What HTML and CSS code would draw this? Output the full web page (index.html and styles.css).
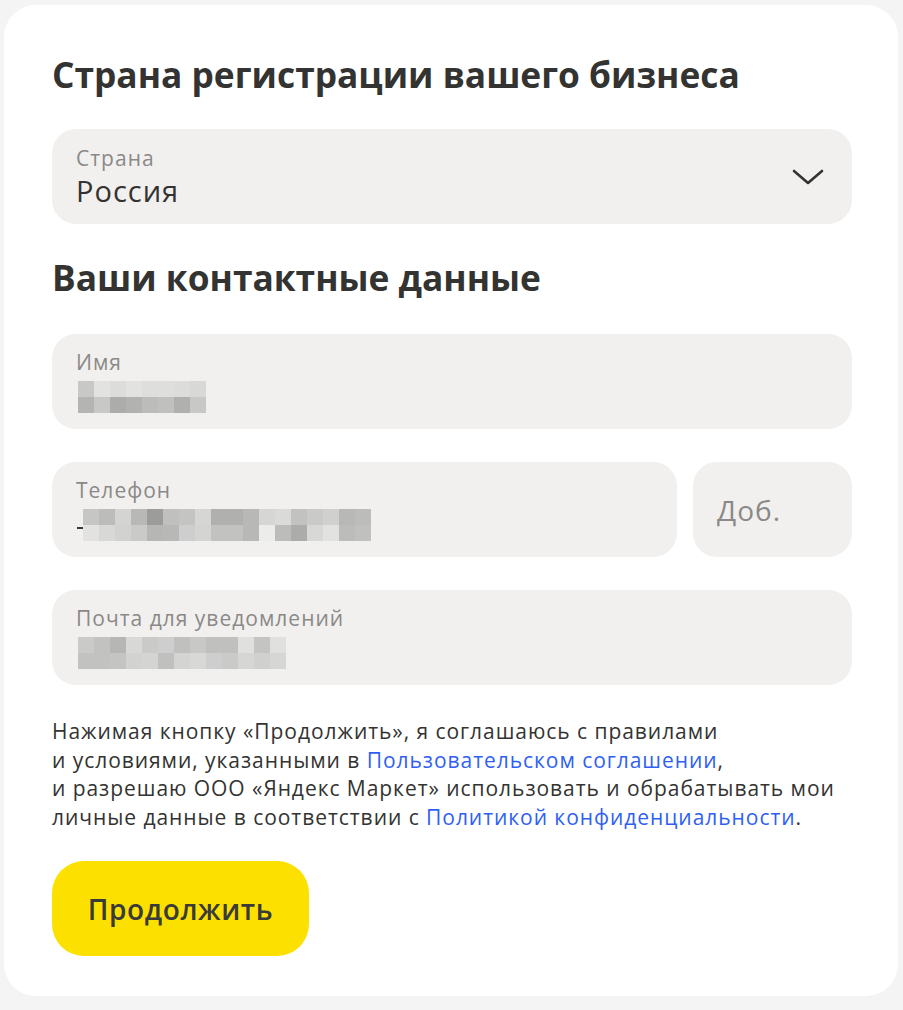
FILE: index.html
```html
<!DOCTYPE html>
<html lang="ru">
<head>
<meta charset="utf-8">
<title>Регистрация</title>
<link rel="stylesheet" href="styles.css">
</head>
<body>
<main class="card">
  <h2 class="title">Страна регистрации вашего бизнеса</h2>
  <div class="field select">
    <div class="field-body">
      <div class="label">Страна</div>
      <div class="value">Россия</div>
    </div>
    <svg class="chevron" width="32" height="18" viewBox="0 0 32 18"><path d="M2 3 L16 15 L30 3" fill="none" stroke="#333" stroke-width="2.6" stroke-linecap="round" stroke-linejoin="round"/></svg>
  </div>

  <h2 class="title second">Ваши контактные данные</h2>

  <div class="field">
    <div class="field-body">
      <div class="label">Имя</div>
      <div class="mosaic" style="grid-template-columns: repeat(8, 16px)">
        <i style="background:#c8c8c6"></i><i style="background:#e2e2e0"></i><i style="background:#dcdcda"></i><i style="background:#e2e2e0"></i><i style="background:#dededc"></i><i style="background:#dededc"></i><i style="background:#dcdcda"></i><i style="background:#d8d8d6"></i>
        <i style="background:#b4b4b2"></i><i style="background:#c8c8c6"></i><i style="background:#acacaa"></i><i style="background:#b2b2b0"></i><i style="background:#bcbcba"></i><i style="background:#c0c0be"></i><i style="background:#b0b0ae"></i><i style="background:#c8c8c6"></i>
      </div>
    </div>
  </div>

  <div class="row">
    <div class="field grow">
      <div class="field-body">
        <div class="label">Телефон</div>
        <div class="masked">
          <span class="dash"></span>
          <div class="mosaic" style="grid-template-columns: repeat(18, 16px)">
            <i style="background:#c6c6c4"></i><i style="background:#bcbcba"></i><i style="background:#d4d4d2"></i><i style="background:#b8b8b6"></i><i style="background:#9c9c9a"></i><i style="background:#c0c0be"></i><i style="background:#c4c4c2"></i><i style="background:#d6d6d4"></i><i style="background:#b0b0ae"></i><i style="background:#b0b0ae"></i><i style="background:#b8b8b6"></i><i style="background:#d6d6d4"></i><i style="background:#dadad8"></i><i style="background:#c2c2c0"></i><i style="background:#cacac8"></i><i style="background:#d0d0ce"></i><i style="background:#b8b8b6"></i><i style="background:#bcbcba"></i>
            <i style="background:#e2e2e0"></i><i style="background:#d8d8d6"></i><i style="background:#d2d2d0"></i><i style="background:#cacac8"></i><i style="background:#b6b6b4"></i><i style="background:#b8b8b6"></i><i style="background:#cecece"></i><i style="background:#d4d4d2"></i><i style="background:#c2c2c0"></i><i style="background:#c2c2c0"></i><i style="background:#b8b8b6"></i><i style="background:#ececea"></i><i style="background:#bcbcba"></i><i style="background:#acacaa"></i><i style="background:#d8d8d6"></i><i style="background:#e2e2e0"></i><i style="background:#bcbcba"></i><i style="background:#c0c0be"></i>
          </div>
        </div>
      </div>
    </div>
    <div class="field ext">
      <div class="placeholder">Доб.</div>
    </div>
  </div>

  <div class="field">
    <div class="field-body">
      <div class="label">Почта для уведомлений</div>
      <div class="mosaic" style="grid-template-columns: repeat(13, 16px)">
        <i style="background:#cacac8"></i><i style="background:#c2c2c0"></i><i style="background:#b6b6b4"></i><i style="background:#d8d8d6"></i><i style="background:#cacac8"></i><i style="background:#cecece"></i><i style="background:#c0c0be"></i><i style="background:#c8c8c6"></i><i style="background:#c0c0be"></i><i style="background:#c0c0be"></i><i style="background:#e0e0de"></i><i style="background:#c4c4c2"></i><i style="background:#e0e0de"></i>
        <i style="background:#c2c2c0"></i><i style="background:#c2c2c0"></i><i style="background:#c4c4c2"></i><i style="background:#d2d2d0"></i><i style="background:#d4d4d2"></i><i style="background:#c0c0be"></i><i style="background:#d4d4d2"></i><i style="background:#d8d8d6"></i><i style="background:#cecece"></i><i style="background:#cacac8"></i><i style="background:#d6d6d4"></i><i style="background:#d0d0ce"></i><i style="background:#d6d6d4"></i>
      </div>
    </div>
  </div>

  <p class="terms">Нажимая кнопку «Продолжить», я соглашаюсь с правилами<br>и условиями, указанными в <a href="#">Пользовательском соглашении</a>,<br>и разрешаю ООО «Яндекс Маркет» использовать и обрабатывать мои<br>личные данные в соответствии с <a href="#">Политикой конфиденциальности</a>.</p>

  <button class="primary" type="button">Продолжить</button>
</main>
</body>
</html>
```

FILE: styles.css
```css
* { box-sizing: border-box; }

html, body {
  margin: 0;
  padding: 0;
  background: #f4f4f4;
}

body {
  font-family: "Open Sans", "Noto Sans", Arial, sans-serif;
  color: #333331;
  padding: 5px 5px 14px 4px;
}

.card {
  background: #ffffff;
  border-radius: 32px;
  padding: 46px 46px 40px 48px;
  height: 991px;
}

.title {
  margin: 0;
  font-size: 35.3px;
  line-height: 46px;
  font-weight: 700;
  color: #333331;
}

.title.second {
  margin-top: 30px;
  margin-bottom: 34px;
}

.field {
  background: #f1f0ee;
  border-radius: 24px;
  height: 95px;
  display: flex;
  align-items: center;
  padding: 0 24px;
}

.select {
  margin-top: 32px;
  justify-content: space-between;
  padding-right: 28px;
}

.field-body {
  display: flex;
  flex-direction: column;
  gap: 2px;
}

.label {
  font-size: 21px;
  line-height: 26px;
  letter-spacing: 1px;
  color: #8a8987;
}

.value {
  font-size: 29px;
  line-height: 36px;
  letter-spacing: 1px;
  color: #333331;
}

.chevron { display: block; }

.mosaic {
  display: grid;
  grid-auto-rows: 16px;
  margin-left: 2px;
  margin-top: 4px;
  margin-bottom: 2px;
}

.masked {
  display: flex;
  align-items: center;
}

.masked .mosaic { margin-left: 0; }

.dash {
  display: block;
  width: 6px;
  height: 2px;
  background: #3a3a38;
  margin: 8px 0 0 1px;
}

.mosaic i { display: block; }

.row {
  display: flex;
  gap: 16px;
  margin-top: 33px;
}

.grow { flex: 1; }

.ext {
  width: 159px;
  flex: none;
}

.placeholder {
  font-size: 28px;
  letter-spacing: 1px;
  color: #8a8987;
}

.row + .field { margin-top: 33px; }

.terms {
  margin: 32px 0 0;
  font-size: 21px;
  line-height: 28.5px;
  letter-spacing: 0.95px;
  color: #333331;
}

.terms a {
  color: #2f5ff5;
  text-decoration: none;
}

.primary {
  margin-top: 30px;
  width: 257px;
  height: 95px;
  border: none;
  border-radius: 32px;
  background: #fce000;
  color: #3a3a38;
  font-family: inherit;
  font-size: 28px;
  font-weight: 600;
  letter-spacing: 0.6px;
  padding: 0;
  cursor: pointer;
}
```
